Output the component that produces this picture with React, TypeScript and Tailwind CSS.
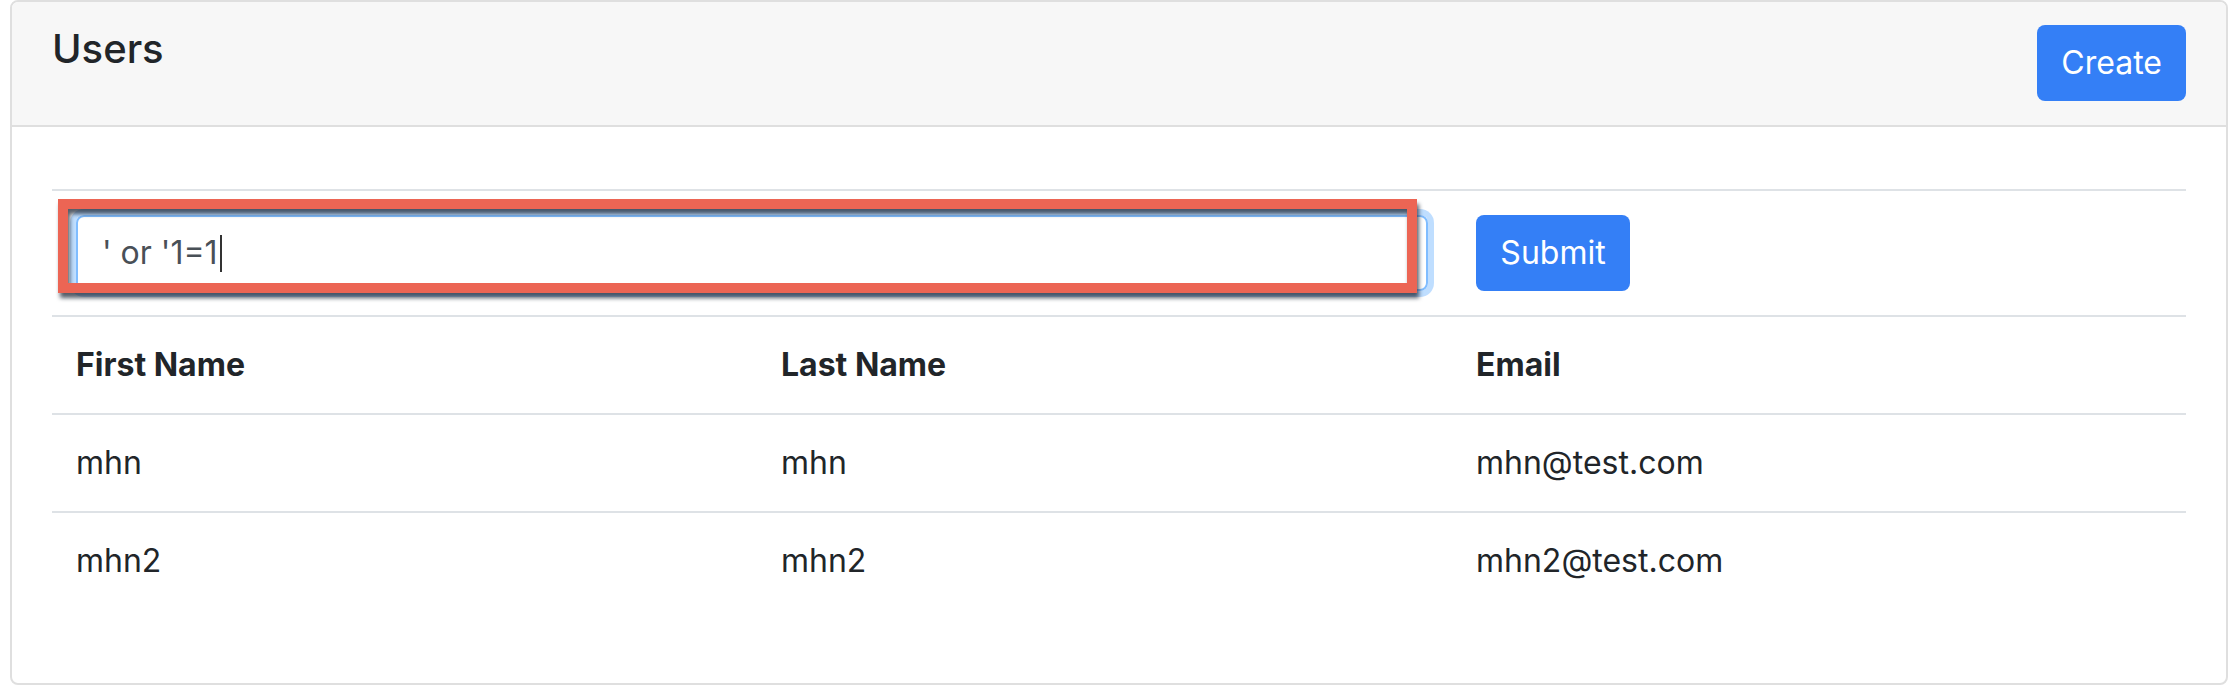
import React from "react";

const users = [
  { first: "mhn", last: "mhn", email: "mhn@test.com" },
  { first: "mhn2", last: "mhn2", email: "mhn2@test.com" },
];

export default function App() {
  return (
    <div className="min-h-screen bg-white pl-[10px] pr-[8px] font-['Inter',sans-serif] text-[#212529]">
      <div className="rounded-[8px] border-2 border-[#dfdfdf] overflow-hidden">
        {/* Card header */}
        <div className="flex items-start justify-between bg-[#f7f7f7] border-b-2 border-[#dfdfdf] px-[40px] pt-[23px] pb-[24px]">
          <h5 className="text-[40px] leading-[48px] font-medium">Users</h5>
          <button className="h-[76px] px-[24px] rounded-[8px] bg-[#347ff6] text-white text-[32px] leading-[48px]">
            Create
          </button>
        </div>

        {/* Card body */}
        <div className="px-[40px] pt-[62px] pb-[42px]">
          <div className="mb-[32px]">
            {/* Search form row */}
            <div className="relative flex items-center border-t-2 border-[#dee2e6] p-[24px]">
              <div className="flex items-center w-[1352px] h-[76px] rounded-[8px] border-2 border-[#80bdff] shadow-[0_0_0_6px_rgba(0,123,255,0.25)] px-[24px] text-[32px] text-[#495057]">
                <span>' or '1=1</span>
                <span className="ml-[2px] w-[2px] h-[37px] bg-[#333]" />
              </div>
              <button className="ml-[48px] h-[76px] w-[154px] rounded-[8px] bg-[#347ff6] text-white text-[32px] leading-[48px]">
                Submit
              </button>
              {/* annotation box */}
              <div className="absolute left-[6px] top-[8px] w-[1359px] h-[94px] border-[10px] border-[#ec6554] drop-shadow-[2px_5px_2px_rgba(30,40,55,0.75)]" />
            </div>

            <table className="w-full border-collapse text-[32px] leading-[48px]">
              <thead>
                <tr className="border-t-2 border-[#dee2e6]">
                  <th className="w-[705px] p-[24px] text-left font-bold">First Name</th>
                  <th className="w-[695px] p-[24px] text-left font-bold">Last Name</th>
                  <th className="p-[24px] text-left font-bold">Email</th>
                </tr>
              </thead>
              <tbody>
                {users.map((u) => (
                  <tr key={u.email} className="border-t-2 border-[#dee2e6]">
                    <td className="p-[24px]">{u.first}</td>
                    <td className="p-[24px]">{u.last}</td>
                    <td className="p-[24px]">{u.email}</td>
                  </tr>
                ))}
              </tbody>
            </table>
          </div>
        </div>
      </div>
    </div>
  );
}
